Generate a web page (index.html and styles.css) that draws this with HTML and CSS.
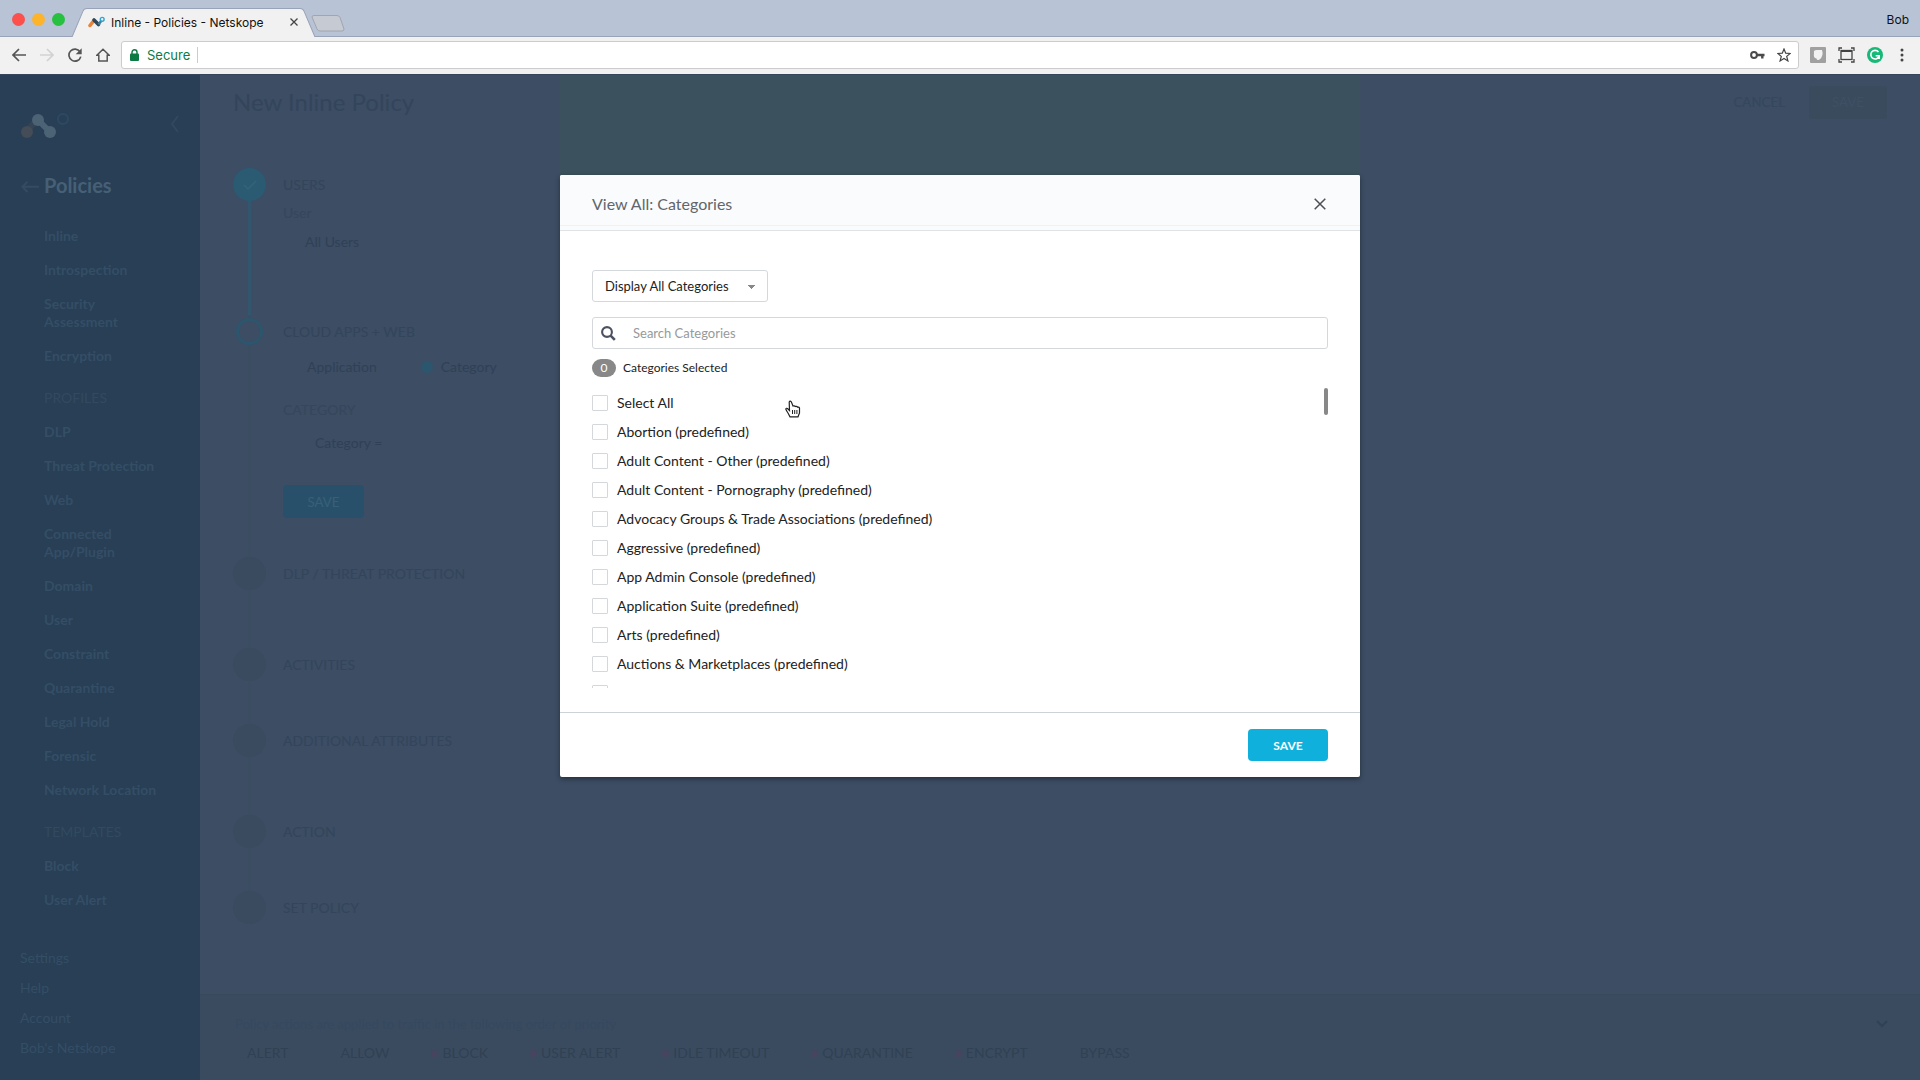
FILE: index.html
```html
<!DOCTYPE html>
<html lang="en">
<head>
    <meta charset="UTF-8">
    <title>Inline - Policies - Netskope</title>
    <link rel="stylesheet" href="styles.css">
</head>
<body>

    <!-- Browser window -->
    <div class="tabstrip">
        <div class="lights">
            <span class="light red"></span>
            <span class="light yellow"></span>
            <span class="light green"></span>
        </div>
        <div class="tab">
            <svg class="tab-shape" viewBox="0 0 244 28" preserveAspectRatio="none">
                <path d="M0 28 L11 3 Q12 .5 15 .5 H228 Q231 .5 232 3 L243 28" fill="#f1f1f1" stroke="#98a3b8"/>
            </svg>
            <svg class="favicon" viewBox="0 0 17 12">
                <path d="M2 9.500 L5.500 5" stroke="#e8833a" stroke-width="3.500" stroke-linecap="round"/>
                <path d="M6 4 L10.500 8.500" stroke="#2d4658" stroke-width="3.600" stroke-linecap="round"/>
                <path d="M10.500 8.500 L13.500 4.500" stroke="#3c7d9c" stroke-width="2.500"/>
                <circle cx="14.200" cy="3.300" r="1.900" fill="#f1f1f1" stroke="#2fa4cf" stroke-width="1.400"/>
            </svg>
            <span class="tab-title">Inline - Policies - Netskope</span>
            <button class="tab-close" aria-label="Close tab">
                <svg width="8" height="8" viewBox="0 0 8 8"><path d="M.5 .5 L7.500 7.500 M7.500 .5 L.5 7.500" stroke="#444" stroke-width="1.300"/></svg>
            </button>
        </div>
        <svg class="new-tab" width="34" height="17" viewBox="0 0 34 17">
            <path d="M3 .5 H26 Q28 .5 29 2.500 L33 14 Q33 16 31 16 H9 Q7 16 6 14 L1 2 Q1 .5 3 .5Z" fill="#c6cbd3" stroke="#a0a5ae"/>
        </svg>
        <span class="profile">Bob</span>
    </div>
    <div class="toolbar">
        <button class="tool" aria-label="Back"><svg width="14" height="14" viewBox="0 0 14 14"><path d="M14 7 H1.500 M7 1 L1 7 L7 13" stroke="#555" stroke-width="1.700" fill="none"/></svg></button>
        <button class="tool" aria-label="Forward"><svg width="14" height="14" viewBox="0 0 14 14"><path d="M0 7 H12.500 M7 1 L13 7 L7 13" stroke="#d2d2d2" stroke-width="1.700" fill="none"/></svg></button>
        <button class="tool" aria-label="Reload"><svg width="14" height="14" viewBox="0 0 14 14"><path d="M12 3.800 A6 6 0 1 0 12.800 8.600" stroke="#555" stroke-width="1.700" fill="none"/><path d="M13.700 .3 V6.300 H7.700Z" fill="#555"/></svg></button>
        <button class="tool" aria-label="Home"><svg width="14" height="14" viewBox="0 0 14 14"><path d="M.8 7.300 L7 1.200 L13.200 7.300 H11.200 V13 H2.800 V7.300Z" stroke="#555" stroke-width="1.500" fill="none"/></svg></button>
        <div class="address">
            <svg width="9" height="12" viewBox="0 0 9 12"><rect y="4.500" width="9" height="7.500" rx="1" fill="#0b7a43"/><path d="M2 5 V3.300 A2.500 2.500 0 0 1 7 3.300 V5" stroke="#0b7a43" stroke-width="1.400" fill="none"/></svg>
            <label class="secure" for="url">Secure</label>
            <input id="url" type="text">
            <svg width="15" height="10" viewBox="0 0 15 10"><circle cx="4" cy="5" r="2.900" stroke="#4a4a4a" stroke-width="2" fill="none"/><path d="M7 5 H14.500 M12.300 5 V8.500" stroke="#4a4a4a" stroke-width="2.400"/></svg>
            <svg class="star" width="14" height="14" viewBox="0 0 14 14"><path d="M7 1 L8.700 5.200 L13.200 5.500 L9.700 8.400 L10.900 12.900 L7 10.400 L3.100 12.900 L4.300 8.400 L.8 5.500 L5.300 5.200Z" stroke="#444" stroke-width="1.200" fill="none"/></svg>
        </div>
        <div class="extensions">
            <svg width="16" height="16" viewBox="0 0 16 16"><rect width="16" height="16" rx="1" fill="#a0a0a0"/><path d="M4 6 Q3 3 7 3 H12 Q14 9 9.500 12.500 Q7 14 6.500 11.500 Q3 11 4 6Z" fill="#f2f2f2"/></svg>
            <svg width="17" height="16" viewBox="0 0 17 16" fill="none" stroke="#444"><path d="M1 4 V1 H4 M13 1 H16 V4 M16 12 V15 H13 M4 15 H1 V12" stroke-width="1.300"/><rect x="3" y="3.500" width="11" height="9" stroke-width="1.300"/><path d="M3 4 H14" stroke-width="2"/></svg>
            <svg width="16" height="16" viewBox="0 0 16 16"><circle cx="8" cy="8" r="8" fill="#17b978"/><path d="M11.500 5 A4.300 4.300 0 1 0 12.200 9 M8.700 8.800 H12.200 V12" stroke="#fff" stroke-width="1.600" fill="none"/></svg>
            <svg class="dots" width="4" height="14" viewBox="0 0 4 14" fill="#444"><circle cx="2" cy="2" r="1.500"/><circle cx="2" cy="7" r="1.500"/><circle cx="2" cy="12" r="1.500"/></svg>
        </div>
    </div>

    <div class="app">
        <nav class="sidebar">
            <div class="brand">
                <svg width="50" height="28" viewBox="0 0 50 28">
                    <path d="M8 19 L18 7" stroke="#354555" stroke-width="6"/>
                    <circle cx="7" cy="21" r="6" fill="#434c57"/>
                    <path d="M18 9 L30 21" stroke="#4c6275" stroke-width="6"/>
                    <circle cx="18" cy="9" r="6" fill="#4c6275"/>
                    <circle cx="30" cy="21" r="6" fill="#4c6275"/>
                    <circle cx="43" cy="8" r="5" fill="none" stroke="#2c4a62" stroke-width="2"/>
                </svg>
                <svg width="14" height="28" viewBox="0 0 14 28"><path d="M8 5 L2 13 L8 21" stroke="#31495e" stroke-width="2" fill="none"/></svg>
            </div>
            <h2><span class="back-arrow">&larr;</span><span>Policies</span></h2>
            <ul class="menu">
                <li><a href="#">Inline</a></li>
                <li><a href="#">Introspection</a></li>
                <li><a href="#">Security<br>Assessment</a></li>
                <li><a href="#">Encryption</a></li>
                <li class="section">PROFILES</li>
                <li><a href="#">DLP</a></li>
                <li><a href="#">Threat Protection</a></li>
                <li><a href="#">Web</a></li>
                <li><a href="#">Connected<br>App/Plugin</a></li>
                <li><a href="#">Domain</a></li>
                <li><a href="#">User</a></li>
                <li><a href="#">Constraint</a></li>
                <li><a href="#">Quarantine</a></li>
                <li><a href="#">Legal Hold</a></li>
                <li><a href="#">Forensic</a></li>
                <li><a href="#">Network Location</a></li>
                <li class="section">TEMPLATES</li>
                <li><a href="#">Block</a></li>
                <li><a href="#">User Alert</a></li>
            </ul>
            <ul class="links">
                <li><a href="#">Settings</a></li>
                <li><a href="#">Help</a></li>
                <li><a href="#">Account</a></li>
                <li><a href="#">Bob's Netskope</a></li>
            </ul>
        </nav>

        <main class="main">
            <div class="page-head">
                <h1>New Inline Policy</h1>
                <button class="cancel">CANCEL</button>
                <button class="save-policy">SAVE</button>
            </div>
            <ol class="steps">
                <li class="step done">
                    <span class="dot"><svg width="14" height="10" viewBox="0 0 14 10"><path d="M1 5 L5 9 L13 1" stroke="#33607a" stroke-width="2" fill="none"/></svg></span>
                    <div class="step-body">
                        <h3>USERS</h3>
                        <p class="field">User</p>
                        <p class="value">All Users</p>
                    </div>
                </li>
                <li class="step current">
                    <span class="dot"></span>
                    <div class="step-body">
                        <h3>CLOUD APPS + WEB</h3>
                        <div class="radios">
                            <label><input type="radio" name="kind">Application</label>
                            <label><input type="radio" name="kind" checked>Category</label>
                        </div>
                        <p class="field">CATEGORY</p>
                        <p class="value category">Category =</p>
                        <button class="next">SAVE</button>
                    </div>
                </li>
                <li class="step"><span class="dot"></span><div class="step-body"><h3>DLP / THREAT PROTECTION</h3></div></li>
                <li class="step short"><span class="dot"></span><div class="step-body"><h3>ACTIVITIES</h3></div></li>
                <li class="step"><span class="dot"></span><div class="step-body"><h3>ADDITIONAL ATTRIBUTES</h3></div></li>
                <li class="step short"><span class="dot"></span><div class="step-body"><h3>ACTION</h3></div></li>
                <li class="step last"><span class="dot"></span><div class="step-body"><h3>SET POLICY</h3></div></li>
            </ol>
            <footer class="legend">
                <div class="legend-head">
                    <span>Policy actions are applied to traffic in the following order of priority</span>
                    <svg width="12" height="8" viewBox="0 0 12 8"><path d="M1 1 L6 6 L11 1" stroke="#2f4354" stroke-width="2" fill="none"/></svg>
                </div>
                <ul>
                    <li>ALERT</li>
                    <li>ALLOW</li>
                    <li class="flag">BLOCK</li>
                    <li class="flag">USER ALERT</li>
                    <li class="flag">IDLE TIMEOUT</li>
                    <li class="flag">QUARANTINE</li>
                    <li class="flag">ENCRYPT</li>
                    <li>BYPASS</li>
                </ul>
            </footer>
        </main>

        <div class="overlay">
            <div class="banner"></div>
            <div class="modal" role="dialog" aria-labelledby="modal-title">
                <div class="modal-header">
                    <h2 id="modal-title">View All: Categories</h2>
                    <button class="close" aria-label="Close">
                        <svg width="12" height="12" viewBox="0 0 12 12"><path d="M.7 .7 L11.300 11.300 M11.300 .7 L.7 11.300" stroke="#4a4f55" stroke-width="1.500"/></svg>
                    </button>
                </div>
                <div class="modal-body">
                    <select aria-label="Display">
                        <option>Display All Categories</option>
                    </select>
                    <div class="search">
                        <svg width="15" height="15" viewBox="0 0 15 15"><circle cx="6" cy="6" r="4.900" stroke="#4d5263" stroke-width="2.100" fill="none"/><path d="M9.600 9.600 L13.800 13.800" stroke="#4d5263" stroke-width="2.600"/></svg>
                        <input type="text" placeholder="Search Categories" aria-label="Search Categories">
                    </div>
                    <div class="selected">
                        <span class="count">0</span>
                        <span>Categories Selected</span>
                    </div>
                    <div class="list">
                        <div class="items">
                            <label><input type="checkbox">Select All</label>
                            <label><input type="checkbox">Abortion (predefined)</label>
                            <label><input type="checkbox">Adult Content - Other (predefined)</label>
                            <label><input type="checkbox">Adult Content - Pornography (predefined)</label>
                            <label><input type="checkbox">Advocacy Groups &amp; Trade Associations (predefined)</label>
                            <label><input type="checkbox">Aggressive (predefined)</label>
                            <label><input type="checkbox">App Admin Console (predefined)</label>
                            <label><input type="checkbox">Application Suite (predefined)</label>
                            <label><input type="checkbox">Arts (predefined)</label>
                            <label><input type="checkbox">Auctions &amp; Marketplaces (predefined)</label>
                            <label><input type="checkbox" aria-label="More"></label>
                        </div>
                        <div class="scrollbar"></div>
                        <svg class="pointer" width="16" height="18" viewBox="0 0 16 18"><path d="M4.500 10.500 L2.500 8.500 Q1 7.800 .8 9 Q1.500 11 3 13 L5 16.800 H13 L14.500 13 V8 Q14 6.800 12.700 7.300 Q12 6 10.500 6.500 Q9.500 5.400 8 6 L6.300 1.800 Q5 .5 4.200 2Z" fill="#fff" stroke="#222" stroke-width="1.200"/><path d="M7.500 10 V14 M9.700 10 V14 M11.900 10 V14" stroke="#222"/></svg>
                    </div>
                </div>
                <div class="modal-footer">
                    <button class="save">SAVE</button>
                </div>
            </div>
        </div>
    </div>

</body>
</html>
```

FILE: styles.css
```css
* {
    margin: 0;
    padding: 0;
    box-sizing: border-box;
}

body {
    height: 100vh;
    display: flex;
    flex-direction: column;
    overflow: hidden;
    font-family: Lato, sans-serif;
    font-size: 14px;
}

ul, ol {
    list-style: none;
}

a {
    color: inherit;
    text-decoration: none;
}

button {
    border: none;
    background: none;
    font-family: inherit;
    cursor: pointer;
}

svg {
    display: block;
    flex-shrink: 0;
}

/* browser window */
.tabstrip {
    height: 37px;
    flex-shrink: 0;
    display: flex;
    align-items: flex-end;
    background-color: #b8c3d5;
    border-bottom: 1px solid #98a3b8;
    font-family: Inter, sans-serif;
}

.lights {
    display: flex;
    gap: 7px;
    padding: 0 7px 10px 12px;
}

.light {
    width: 13px;
    height: 13px;
    border-radius: 50%;
}

.red { background-color: #fb504b; }
.yellow { background-color: #fdb32a; }
.green { background-color: #27c13f; }

.tab {
    width: 244px;
    height: 29px;
    position: relative;
    display: flex;
    align-items: center;
    gap: 6px;
    padding: 0 18px 1px 16px;
    margin-bottom: -1px;
}

.tab-shape {
    position: absolute;
    top: 0;
    left: 0;
    width: 100%;
    height: 100%;
}

.favicon {
    width: 17px;
    height: 12px;
    position: relative;
}

.tab-title {
    position: relative;
    flex: 1;
    font-size: 12px;
    white-space: nowrap;
    color: #111;
}

.tab-close {
    position: relative;
}

.new-tab {
    margin: 0 0 4px -5px;
}

.profile {
    margin-left: auto;
    padding: 0 11px 9px 0;
    font-size: 12px;
    color: #111;
}

.toolbar {
    height: 37px;
    flex-shrink: 0;
    display: flex;
    align-items: center;
    gap: 14px;
    padding: 0 16px 1px 12px;
    background-color: #f1f1f1;
}

.address {
    flex: 1;
    height: 28px;
    margin-left: -3px;
    padding: 0 7px 0 8px;
    display: flex;
    align-items: center;
    gap: 8px;
    background-color: #fff;
    border: 1px solid #ccc;
    border-radius: 3px;
    font-family: Inter, sans-serif;
}

.secure {
    color: #0b7a43;
    font-size: 13px;
    padding-right: 7px;
    border-right: 1px solid #ccc;
}

.address input {
    flex: 1;
    border: none;
    outline: none;
}

.star {
    margin-left: 4px;
}

.extensions {
    display: flex;
    align-items: center;
    gap: 12px;
    margin-left: -3px;
}

.dots {
    margin-left: 5px;
}

/* dimmed page */
.app {
    flex: 1;
    min-height: 0;
    position: relative;
    display: flex;
    background-color: #3c4d64;
    border-top: 1px solid #35465a;
}

.sidebar {
    width: 200px;
    background-color: #293f55;
    color: #344e66;
    font-weight: bold;
}

.brand {
    display: flex;
    justify-content: space-between;
    padding: 36px 16px 0 20px;
}

.sidebar h2 {
    display: flex;
    align-items: center;
    gap: 8px;
    margin-top: 34px;
    padding-left: 20px;
    font-size: 20px;
    line-height: 24px;
    color: #466076;
}

.back-arrow {
    width: 16px;
    color: #354b60;
}

.menu {
    padding: 22px 0 0 44px;
    line-height: 18px;
}

.menu li {
    padding: 8px 0;
}

.menu .section {
    padding-top: 16px;
    font-weight: normal;
    color: #324a60;
}

.links {
    padding: 26px 0 0 20px;
    line-height: 30px;
    font-weight: normal;
}

.main {
    flex: 1;
    display: flex;
    flex-direction: column;
    color: #33455a;
}

.page-head {
    display: flex;
    align-items: center;
    padding: 10px 33px 0 33px;
}

.page-head h1 {
    flex: 1;
    font-size: 24px;
    line-height: 34px;
    font-weight: normal;
}

.page-head button {
    height: 33px;
    color: #35475b;
}

.cancel {
    margin-right: 24px;
}

.page-head .save-policy {
    width: 78px;
    border-radius: 3px;
    background-color: #3a4b5e;
    color: #3e5065;
}

.steps {
    flex: 1;
    padding: 49px 0 0 33px;
}

.step {
    display: flex;
    height: 91px;
    gap: 17px;
    background: linear-gradient(#3b4d61, #3b4d61) 15px 0 / 3px 100% no-repeat;
}

.step.short {
    height: 76px;
}

.step.done {
    height: 147px;
    background-image: linear-gradient(#31566e, #31566e);
}

.step.current {
    height: 242px;
}

.step.last {
    background: none;
}

.dot {
    width: 33px;
    height: 33px;
    border-radius: 50%;
    background-color: #3a4b5f;
    display: flex;
    align-items: center;
    justify-content: center;
}

.done .dot {
    background-color: #2b5a73;
}

.current .dot {
    width: 27px;
    height: 27px;
    margin: 3px;
    background-color: #3c4d64;
    border: 3px solid #2c566d;
}

.step h3 {
    font-size: 14px;
    line-height: 34px;
    font-weight: normal;
}

.field {
    line-height: 22px;
    color: #36475b;
}

.value {
    padding: 7px 0 0 22px;
    line-height: 22px;
    color: #304156;
}

.radios {
    display: flex;
    gap: 44px;
    padding: 7px 0 21px 4px;
    line-height: 22px;
    color: #304156;
}

.radios label {
    display: flex;
    align-items: center;
    gap: 8px;
}

.radios input {
    appearance: none;
    width: 12px;
    height: 12px;
    border-radius: 50%;
}

.radios input:checked {
    background-color: #2c566d;
}

.value.category {
    padding: 11px 0 0 32px;
}

.next {
    width: 81px;
    height: 33px;
    margin-top: 31px;
    border-radius: 4px;
    background-color: #29506a;
    color: #36607a;
}

.legend {
    height: 86px;
    padding: 20px 32px 0 35px;
    background-color: #3a4b5f;
    border-top: 1px solid #37495a;
}

.legend-head {
    display: flex;
    justify-content: space-between;
    align-items: center;
    line-height: 18px;
    font-size: 13px;
    color: #34495f;
}

.legend ul {
    display: flex;
    gap: 52px;
    padding: 10px 0 0 12px;
    line-height: 20px;
    color: #304153;
}

.flag {
    display: flex;
    align-items: center;
    gap: 4px;
    margin-left: -10px;
}

.flag::before {
    content: "";
    width: 7px;
    height: 7px;
    border-radius: 50%;
    background-color: #46445f;
}

/* modal */
.overlay {
    position: absolute;
    inset: 0;
    display: flex;
    flex-direction: column;
    align-items: center;
}

.banner {
    width: 800px;
    height: 100px;
    background-color: #3b515d;
}

.modal {
    width: 800px;
    border-radius: 2px;
    background-color: #fff;
    box-shadow: 0 2px 5px rgba(0, 0, 0, 0.4);
    color: #222;
}

.modal-header {
    display: flex;
    align-items: center;
    justify-content: space-between;
    height: 56px;
    padding: 2px 34px 0 32px;
    background-color: #fafbfc;
    border-bottom: 1px solid #dfe3e6;
    border-radius: 2px 2px 0 0;
    box-shadow: inset 0 -4px #fafbfc, inset 0 -5px #eff1f2;
}

.modal-header h2 {
    font-size: 16px;
    font-weight: normal;
    color: #5f666d;
}

.modal-body {
    padding: 39px 32px 24px;
}

.modal-body select {
    appearance: none;
    display: block;
    width: 176px;
    height: 32px;
    padding-left: 12px;
    border: 1px solid #d5d8db;
    border-radius: 3px;
    background: linear-gradient(to bottom right, #888 50%, transparent 50%) 159px 14px / 4px 4px no-repeat, linear-gradient(to bottom left, #888 50%, transparent 50%) 155px 14px / 4px 4px no-repeat;
    font-family: inherit;
    font-size: 13px;
    color: #222;
}

.search {
    display: flex;
    align-items: center;
    gap: 17px;
    height: 32px;
    margin-top: 15px;
    padding-left: 8px;
    border: 1px solid #d5d8db;
    border-radius: 3px;
}

.search input {
    flex: 1;
    border: none;
    outline: none;
    font-family: inherit;
    font-size: 13px;
}

.search input::placeholder {
    color: #999;
}

.selected {
    display: flex;
    align-items: center;
    gap: 7px;
    margin-top: 10px;
    font-size: 12px;
    line-height: 18px;
}

.count {
    width: 24px;
    border-radius: 9px;
    background-color: #888;
    color: #fff;
    text-align: center;
}

.list {
    position: relative;
    display: flex;
    justify-content: space-between;
    height: 300px;
    margin-top: 11px;
    overflow: hidden;
}

.items label {
    display: flex;
    align-items: center;
    gap: 9px;
    height: 29px;
    font-size: 14px;
}

.items input {
    appearance: none;
    width: 16px;
    height: 16px;
    border: 1px solid #d5d8db;
    border-radius: 1px;
}

.scrollbar {
    width: 4px;
    height: 27px;
    border-radius: 2px;
    background-color: #888;
}

.pointer {
    position: absolute;
    top: 12px;
    left: 193px;
}

.modal-footer {
    display: flex;
    justify-content: flex-end;
    padding: 16px 32px;
    border-top: 1px solid #ccd2d6;
}

.save {
    width: 80px;
    height: 32px;
    border-radius: 4px;
    background-color: #10b0dc;
    color: #fff;
    font-size: 12px;
    font-weight: bold;
}
```
